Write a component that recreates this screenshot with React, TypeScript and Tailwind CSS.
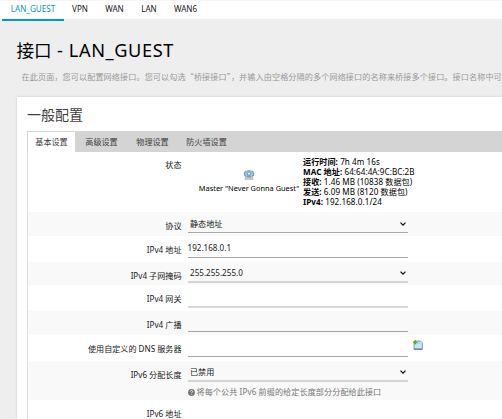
import type { ReactNode } from "react";

const navItems = [
  { label: "LAN_GUEST", cls: "w-[62px] border-[#0099cc] text-[#0099cc]" },
  { label: "VPN", cls: "w-[32px] border-transparent" },
  { label: "WAN", cls: "w-[37px] border-transparent" },
  { label: "LAN", cls: "w-[32px] border-transparent" },
  { label: "WAN6", cls: "w-[41px] border-transparent" },
];

const stats = [
  { name: "运行时间:", value: "7h 4m 16s" },
  { name: "MAC 地址:", value: "64:64:4A:9C:BC:2B" },
  { name: "接收:", value: "1.46 MB (10838 数据包)" },
  { name: "发送:", value: "6.09 MB (8120 数据包)" },
  { name: "IPv4:", value: "192.168.0.1/24" },
];

function Chevron() {
  return (
    <svg className="mr-[2.5px] h-[4px] w-[6px] shrink-0" viewBox="0 0 6 4" fill="none" stroke="#111" strokeWidth="1.25">
      <path d="M.5.6 3 3.1 5.5.6" />
    </svg>
  );
}

function AccessPointIcon() {
  return (
    <svg className="h-[12px] w-[12px]" viewBox="0 0 12 12">
      <ellipse cx="6" cy="5" rx="5" ry="3.8" fill="#9cc6ee" />
      <path d="M3.2 2C.8 3.4.8 6.2 2.8 7.4M8.8 2c2.4 1.4 2.4 4.2.4 5.4" fill="none" stroke="#6ba6df" strokeWidth="1.4" />
      <path d="M3.8 2.2c1.2-.7 3.2-.7 4.4 0" fill="none" stroke="#74abe0" />
      <circle cx="6" cy="4.6" r="1.7" fill="#e5edf2" stroke="#5b7f9f" strokeWidth=".7" />
      <path d="M4.6 6.3h2.8L8.4 8.6H3.6z" fill="#8f999e" />
      <path d="M2.4 8.4h7.2l.6 2H1.8z" fill="#c7cbcc" stroke="#a0a8ac" strokeWidth=".5" />
    </svg>
  );
}

function AddIcon() {
  return (
    <svg className="h-[10px] w-[10px]" viewBox="0 0 10 10">
      <path d="M1 1h6.8l1.6 1.6v6.6H1z" fill="#a9d3f0" stroke="#779db8" strokeWidth=".8" />
      <path d="M2 5 8.7 3v5.3H2z" fill="#c9e6f8" />
      <path d="M7.6 1v1.6h1.6z" fill="#fff" />
      <path d="M1 9.2h8.4" stroke="#416f96" />
      <path d="M2.2.3v4M.2 2.3h4" stroke="#62aa1e" strokeWidth="1.5" />
    </svg>
  );
}

function HelpIcon() {
  return (
    <svg className="mr-[2px] h-[7px] w-[7px] shrink-0" viewBox="0 0 7 7">
      <circle cx="3.5" cy="3.5" r="3.4" fill="#737373" />
      <path d="M2.3 2.6c.1-1.5 2.5-1.4 2.4 0-.1.7-1.1.8-1.1 1.5M3.6 4.8v.8" fill="none" stroke="#fff" strokeWidth=".9" />
    </svg>
  );
}

function Row({ label, row, field, value = "", select = false, extra, hint }: {
  label: string; row: string; field: string; value?: string; select?: boolean; extra?: ReactNode; hint?: ReactNode;
}) {
  return (
    <div className={`flex shrink-0 items-start ${row}`}>
      <div className="flex h-[28px] w-[153.5px] shrink-0 items-center justify-end">{label}</div>
      <div className="ml-[6px] w-[220.5px]">
        <div className={`flex w-full items-center justify-between pt-[3px] ${field}`}>
          <span className={select ? "pl-[2.5px]" : ""}>{value}</span>
          {select && <Chevron />}
        </div>
        {hint}
      </div>
      {extra}
    </div>
  );
}

export default function App() {
  return (
    <div className="h-[419px] w-[502px] overflow-hidden whitespace-nowrap bg-[#eeeeee] font-['Noto_Sans','Noto_Sans_CJK_SC',sans-serif] text-[8.1px] leading-[10px] text-[#202020]">
      <nav className="h-[19px] border-t border-[#f5f5f5] bg-white pl-[2px]">
        <div className="flex h-[20px]">
          {navItems.map((item) => (
            <a key={item.label} className={`flex h-[20px] shrink-0 justify-center border-b-2 pt-[2.5px] ${item.cls}`}>
              {item.label}
            </a>
          ))}
        </div>
      </nav>
      <h1 className="mt-[19px] ml-[16.5px] h-[24px] text-[17.6px] leading-[24px] text-black">
        接口<span className="text-[18.2px] tracking-[0.6px]"> - LAN_GUEST</span>
      </h1>
      <p className="mt-[10px] ml-[21.5px] h-[10px] font-['Noto_Sans_CJK_SC',sans-serif] text-[8.13px] tracking-[0.085px] text-[#999]">
        在此页面，您可以配置网络接口。您可以勾选“桥接接口”，并输入由空格分隔的多个网络接口的名称来桥接多个接口。接口名称中可
      </p>
      <main className="mt-[15px] ml-[17px] h-[322px] bg-white pl-[10px] shadow-[0_0_2px_rgba(0,0,0,.18)]">
        <h2 className="h-[34px] pt-[8px] text-[14px] leading-[20px] text-[#404040]">一般配置</h2>
        <div className="flex h-[21px] bg-[#d4d4d4] pl-[1px] text-[#404040]">
          <span className="mt-[1px] flex w-[47px] items-center justify-center bg-white">基本设置</span>
          <span className="flex w-[53px] items-center justify-center">高级设置</span>
          <span className="flex w-[49px] items-center justify-center">物理设置</span>
          <span className="flex w-[59px] items-center justify-center">防火墙设置</span>
        </div>
        <section className="flex h-[267px] flex-col border-l border-[#dddddd]">
          <div className="flex h-[60px] shrink-0">
            <div className="w-[153.5px] pt-[8px] text-right">状态</div>
            <div className="ml-[17.5px] flex w-[100px] flex-col items-center pt-[17px]">
              <AccessPointIcon />
              <span className="mt-[1.5px] text-[7.4px] text-black">Master "Never Gonna Guest"</span>
            </div>
            <div className="ml-[4px] pt-[5px] text-black">
              {stats.map((s) => (
                <div key={s.name} className="h-[10px] tracking-[0.06px]"><b>{s.name}</b> {s.value}</div>
              ))}
            </div>
          </div>
          <Row label="协议" row="h-[24px] bg-[#f9f9f9]" field="h-[21px] border-b border-[#a6a6a6]" value="静态地址" select />
          <Row label="IPv4 地址" row="h-[26px]" field="h-[22px] border-b border-[#a6a6a6]" value="192.168.0.1" />
          <Row label="IPv4 子网掩码" row="h-[23px] bg-[#f9f9f9]" field="h-[21px] border-b-2 border-[#d4d4d4]" value="255.255.255.0" select />
          <Row label="IPv4 网关" row="h-[26px]" field="h-[23px] border-b-2 border-[#d8d8d8]" />
          <Row label="IPv4 广播" row="h-[24px] bg-[#f9f9f9]" field="h-[21px] border-b border-[#a6a6a6]" />
          <Row label="使用自定义的 DNS 服务器" row="h-[26px]" field="h-[22px] border-b border-[#a6a6a6]" extra={<div className="ml-[5px] pt-[5px]"><AddIcon /></div>} />
          <Row label="IPv6 分配长度" row="h-[39px] bg-[#f9f9f9]" field="h-[21px] border-b-2 border-[#d4d4d4]" value="已禁用" select
            hint={<div className="mt-[5px] flex items-center tracking-[0.09px] text-[#777]"><HelpIcon />将每个公共 IPv6 前缀的给定长度部分分配给此接口</div>} />
          <Row label="IPv6 地址" row="h-[27px]" field="h-[21px]" />
        </section>
      </main>
    </div>
  );
}
